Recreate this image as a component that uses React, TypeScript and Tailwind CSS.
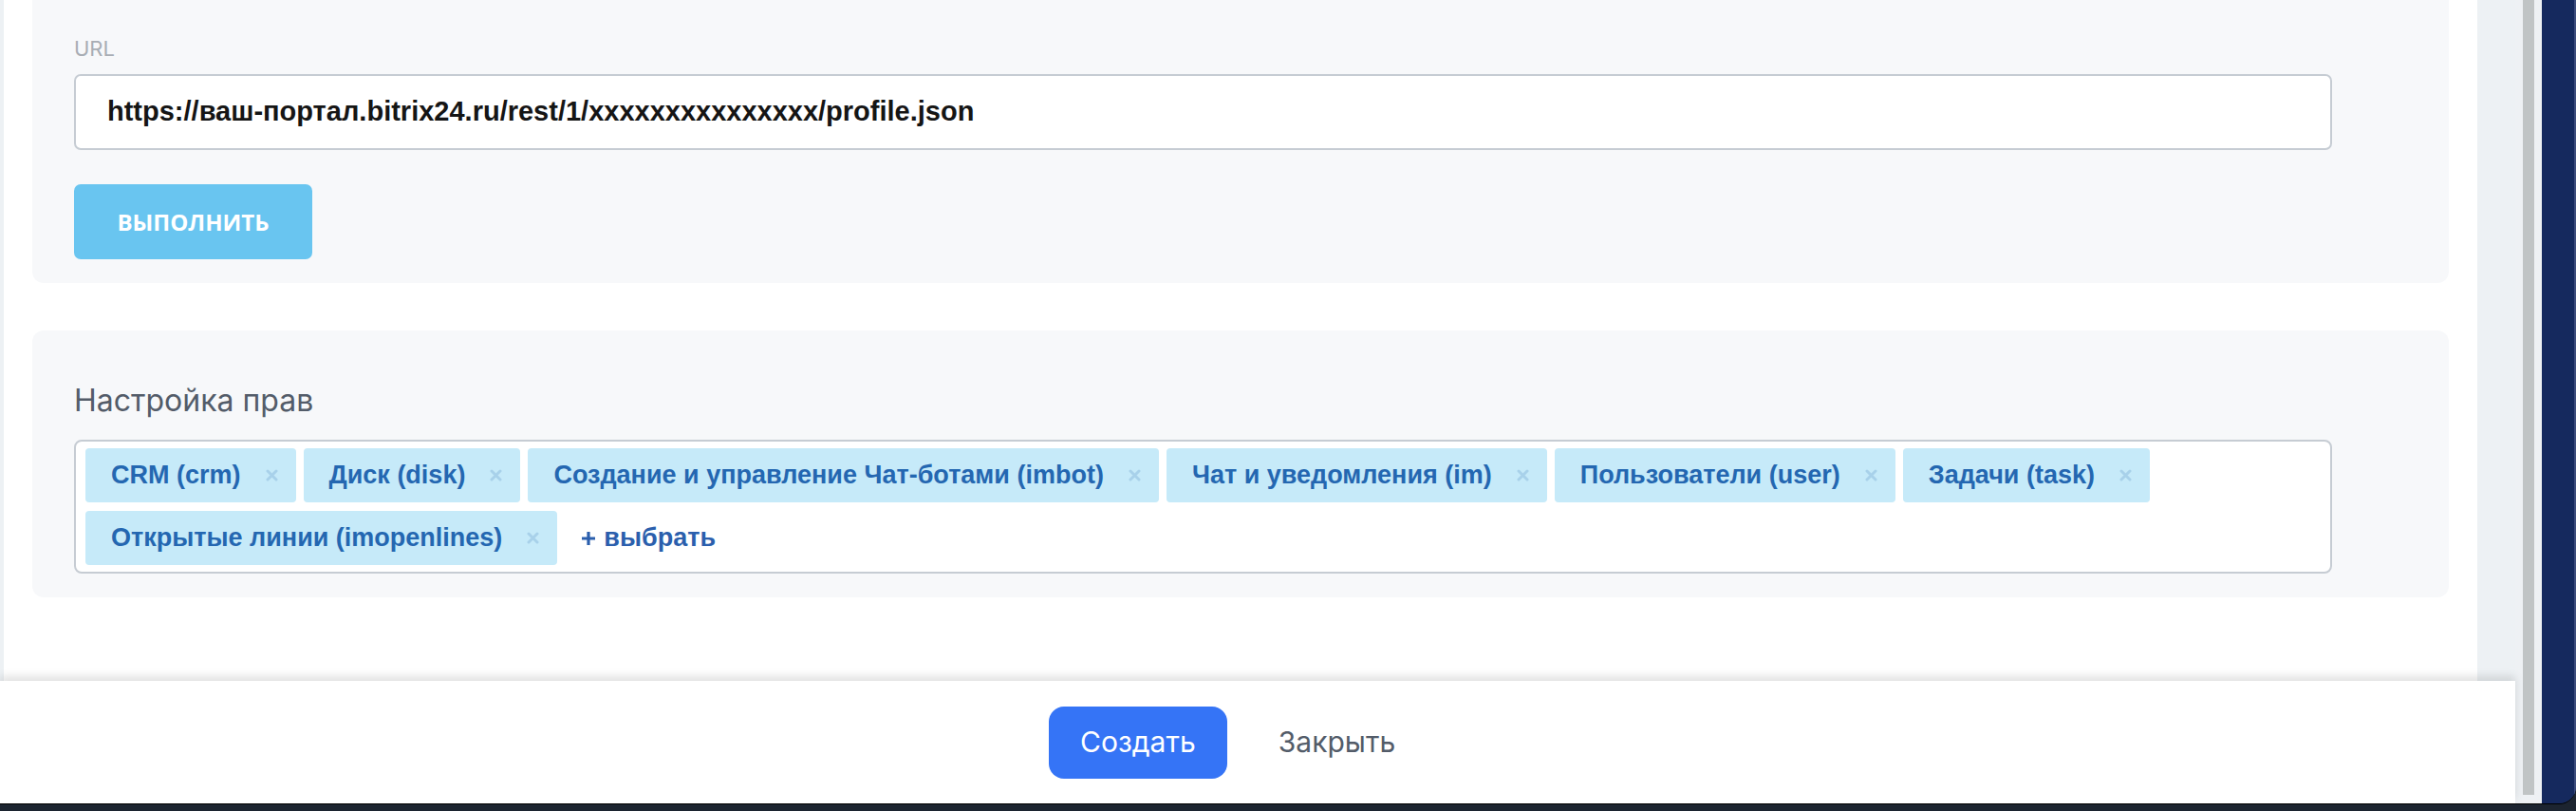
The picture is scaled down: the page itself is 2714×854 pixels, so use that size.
import React from "react";

const tags = [
  "CRM (crm)",
  "Диск (disk)",
  "Создание и управление Чат-ботами (imbot)",
  "Чат и уведомления (im)",
  "Пользователи (user)",
  "Задачи (task)",
  "Открытые линии (imopenlines)",
];

function XIcon() {
  return (
    <svg width="13" height="13" viewBox="0 0 13 13" className="shrink-0">
      <path d="M2 2L11 11M11 2L2 11" stroke="#a8d1ea" strokeWidth="3" strokeLinecap="round" />
    </svg>
  );
}

export default function App() {
  return (
    <div className="w-[2714px] h-[854px] bg-[#1c2430] overflow-hidden">
      <div className="flex h-[847px] rounded-br-[18px] overflow-hidden border-b border-black">
        <div className="flex flex-col w-[2650px]">
          <div className="flex flex-1 min-h-0">
            <div className="w-[4px] bg-[#edf1f4]" />
            <div className="w-[2606px] bg-white px-[30px]">
              {/* Card 1 */}
              <div className="bg-[#f7f8fa] rounded-b-[12px] pt-[38px] pb-[25px] pl-[44px] pr-[123px]">
                <div className="font-['Inter',sans-serif] text-[22px] leading-[26px] text-[#a8adb4]">URL</div>
                <div className="mt-[14px] h-[80px] bg-white border-2 border-[#c6ccd3] rounded-[7px] flex items-center pl-[33px]">
                  <span className="font-['Liberation_Sans',Arial,sans-serif] font-bold text-[29px] text-[#151515]">
                    https://ваш-портал.bitrix24.ru/rest/1/xxxxxxxxxxxxxxx/profile.json
                  </span>
                </div>
                <button className="mt-[36px] w-[251px] h-[79px] bg-[#69c5f0] rounded-[7px] flex items-center justify-center font-['Open_Sans',sans-serif] font-bold text-[24px] text-white uppercase">
                  выполнить
                </button>
              </div>

              {/* Card 2 */}
              <div className="mt-[50px] bg-[#f7f8fa] rounded-[12px] pt-[54px] pb-[25px] pl-[44px] pr-[123px]">
                <div className="font-['Inter',sans-serif] text-[32px] leading-[40px] text-[#535c69]">Настройка прав</div>
                <div className="mt-[21px] bg-white border-2 border-[#c6ccd3] rounded-[8px] pt-[7px] pb-[7px] px-[10px] flex flex-wrap gap-x-[8px] gap-y-[9px]">
                  {tags.map((t) => (
                    <div
                      key={t}
                      className="h-[57px] bg-[#c6eaf9] rounded-[4px] flex items-center pl-[27px] pr-[19px] gap-[26px]"
                    >
                      <span className="font-['Liberation_Sans',Arial,sans-serif] font-bold text-[27px] text-[#2467b1] whitespace-nowrap">
                        {t}
                      </span>
                      <XIcon />
                    </div>
                  ))}
                  <div className="h-[57px] flex items-center pl-[17px] gap-[8px]">
                    <svg width="16" height="16" viewBox="0 0 16 16">
                      <path d="M8 1V15M1 8H15" stroke="#2b5fad" strokeWidth="3.2" />
                    </svg>
                    <span className="font-['Liberation_Sans',Arial,sans-serif] font-bold text-[27px] text-[#2b5fad]">
                      выбрать
                    </span>
                  </div>
                </div>
              </div>
            </div>
            <div className="w-[40px] bg-[#edf1f4]" />
          </div>
          <div className="h-[129px] shrink-0 bg-white relative z-10 shadow-[0_-5px_9px_rgba(0,0,0,0.12)] flex items-center justify-center pr-[40px] gap-[19px]">
            <button className="w-[188px] h-[76px] rounded-[16px] bg-[#3574f6] text-white font-['Inter',sans-serif] text-[30px]">
              Создать
            </button>
            <button className="h-[76px] px-[35px] text-[#535c69] font-['Inter',sans-serif] text-[30px]">
              Закрыть
            </button>
          </div>
        </div>
        <div className="w-[28px] bg-[#eef1f4] pl-[8px] pr-[8px] pb-[9px]">
          <div className="w-[12px] h-full bg-[#c0c4c5]" />
        </div>
        <div className="flex-1 bg-[#15295e] border-r-2 border-[#3c4c7c]" />
      </div>
    </div>
  );
}
